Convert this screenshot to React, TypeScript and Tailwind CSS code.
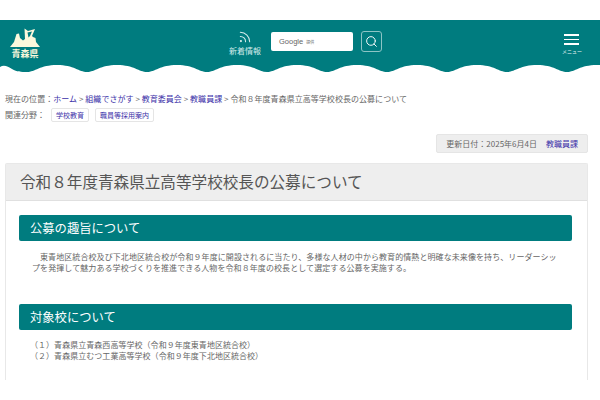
import { Rss, Search } from 'lucide-react';

const font = { fontFamily: '"Noto Sans CJK JP", "Noto Sans", sans-serif' };

const crumbs = ['ホーム', '組織でさがす', '教育委員会', '教職員課'];

const Wave = () => {
  // 60px period, teal bottoms at x = 27 + 60n
  let d = 'M0 0 L0 2';
  d += ' C4 -0.5 8 1.5 12 4 C17 7 21 7 27 7';
  for (let x = 27; x < 600; x += 60) {
    d += ` C${x + 8} 7 ${x + 13} 0 ${x + 30} 0 C${x + 47} 0 ${x + 52} 7 ${x + 60} 7`;
  }
  d += ' L600 0 Z';
  return (
    <svg width="600" height="8" viewBox="0 0 600 8" className="block" aria-hidden="true">
      <path d={d} fill="#007c7f" />
    </svg>
  );
};

const Logo = () => (
  <svg width="30" height="20" viewBox="0 0 30 20" className="block" aria-hidden="true">
    <path
      d="M0 19 L4 14 L6.500 6 L9 5.500 L10 10 L13 12.500 L15 11 L14.500 0.500 L18 3 L25 1 L22 8 L23 9 L25.500 10 L26 14 L30 19 Z"
      fill="#fbf8dc"
    />
    <path d="M17.500 4.500 L22 3.500 L20 8 L18.500 9.500 Z" fill="#007c7f" />
  </svg>
);

const Heading = ({ children }: { children: string }) => (
  <h2 className="h-[26px] rounded-[2px] bg-[#007c7f] pl-[11px] text-[12.300px] leading-[26px] text-white">
    {children}
  </h2>
);

export default function App() {
  return (
    <div className="h-[400px] w-[600px] overflow-hidden bg-white text-[#666]" style={font}>
      <header className="pt-5">
        <div className="flex h-[45px] items-start bg-[#007c7f]">
          <div className="ml-[10px] mt-[8px] flex w-[30px] flex-col items-center">
            <Logo />
            <span className="mt-[1px] whitespace-nowrap text-[9px] font-bold leading-[10px] text-[#fbf8dc]">青森県</span>
          </div>
          <div className="ml-[189px] mt-[10px] flex w-[32px] flex-col items-center text-[#d5ecec]">
            <Rss size={14} strokeWidth={1.75} />
            <span className="mt-[2px] whitespace-nowrap text-[8px] leading-[10px]">新着情報</span>
          </div>
          <div className="ml-[10px] mt-[12px] flex h-[19px] w-[82px] items-center rounded-[2px] bg-white pl-2">
            <span className="text-[7.500px] text-[#666]" style={{ fontFamily: '"Liberation Sans", sans-serif' }}>Google</span>
            <span className="ml-[3px] text-[4px] text-[#666]">提供</span>
          </div>
          <div className="ml-[8px] mt-[11px] flex h-[21px] w-[21px] items-center justify-center rounded-[3px] border border-[#8cc4c5] text-white">
            <Search size={13} strokeWidth={1.75} />
          </div>
          <div className="ml-auto mr-[18px] mt-[14px] flex flex-col items-center">
            <span className="block h-[1.500px] w-[15px] bg-white" />
            <span className="mt-[3px] block h-[1.500px] w-[15px] bg-white" />
            <span className="mt-[3px] block h-[1.500px] w-[15px] bg-white" />
            <span className="mt-[3px] text-[5px] leading-[6px] text-[#e8f5f5]">メニュー</span>
          </div>
        </div>
        <Wave />
      </header>

      <nav className="ml-[5px] mt-[19px] whitespace-nowrap text-[8px] leading-[14px] tracking-[0.04px]">
        現在の位置：
        {crumbs.map((c) => (
          <span key={c}>
            <a className="text-[#3b2fa8]">{c}</a>
            <span> &gt; </span>
          </span>
        ))}
        令和８年度青森県立高等学校校長の公募について
      </nav>

      <div className="ml-[5px] mt-[2px] flex items-center text-[8px]">
        <span className="w-[46px]">関連分野：</span>
        <a className="flex h-[14px] items-center rounded-[2px] border border-[#e5e5e5] px-[4px] text-[7px] text-[#3b2fa8]">学校教育</a>
        <a className="ml-[6px] flex h-[14px] items-center rounded-[2px] border border-[#e5e5e5] px-[4px] text-[7px] text-[#3b2fa8]">職員等採用案内</a>
      </div>

      <div className="mr-[12px] mt-[12px] flex justify-end">
        <div className="flex h-[19px] items-center rounded-[2px] border border-[#e5e5e5] bg-[#eeeeee] px-[9px] text-[8px]">
          更新日付：2025年6月4日
          <a className="ml-[9px] text-[#3b2fa8]">教職員課</a>
        </div>
      </div>

      <main className="ml-[5px] mt-[10px] h-[217px] w-[583px] rounded-t-[2px] border border-b-0 border-[#e8e8e8]">
        <h1 className="h-[37px] border-b border-[#e0e0e0] bg-[#eeeeee] pl-[14px] text-[15.600px] leading-[35px] text-[#555]">
          令和８年度青森県立高等学校校長の公募について
        </h1>
        <section className="ml-[13px] mr-[15px] mt-[14px]">
          <Heading>公募の趣旨について</Heading>
          <p className="mt-[10px] pl-[13px] pr-[10px] text-[8px] leading-[11px] tracking-[0.08px]">
            <span className="ml-[8px]" />
            東青地区統合校及び下北地区統合校が令和９年度に開設されるに当たり、多様な人材の中から教育的情熱と明確な未来像を持ち、リーダーシップを発揮して魅力ある学校づくりを推進できる人物を令和８年度の校長として選定する公募を実施する。
          </p>
        </section>
        <section className="ml-[13px] mr-[15px] mt-[31px]">
          <Heading>対象校について</Heading>
          <p className="mt-[9px] pl-[11px] text-[8px] leading-[11px] tracking-[0.04px]">
            （１）青森県立青森西高等学校（令和９年度東青地区統合校）
            <br />
            （２）青森県立むつ工業高等学校（令和９年度下北地区統合校）
          </p>
        </section>
      </main>
    </div>
  );
}
